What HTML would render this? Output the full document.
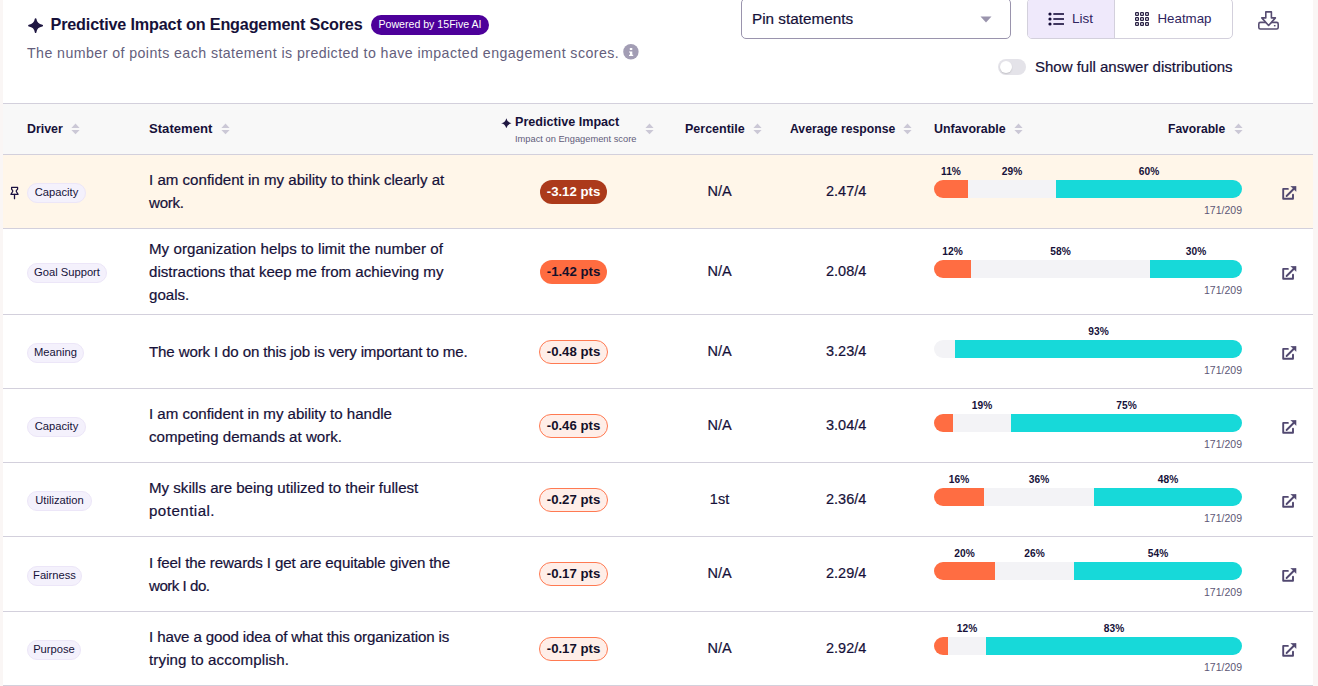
<!DOCTYPE html>
<html><head><meta charset="utf-8"><style>
html,body{margin:0;padding:0;background:#fff;width:1318px;height:686px;overflow:hidden;position:relative;font-family:"Liberation Sans", sans-serif;}
.t{position:absolute;white-space:nowrap;}
.sw{-webkit-text-stroke:0.2px currentColor;}
.r{position:absolute;}
.chip{position:absolute;box-sizing:border-box;height:20px;line-height:17px;border:1px solid #ece6f8;background:#f4f1fc;border-radius:10px;font-size:11.2px;color:#161139;white-space:nowrap;text-align:center;}
.pts{position:absolute;box-sizing:border-box;height:24px;line-height:22px;padding-top:1px;border-radius:12px;font-size:13.2px;font-weight:700;text-align:center;white-space:nowrap;}
.bar{position:absolute;height:18px;border-radius:9px;overflow:hidden;}
.bar div{position:absolute;top:0;height:18px;}
</style></head><body>
<div class="r" style="left:0px;top:0px;width:3px;height:686px;background:#faf6f5;"></div>
<div class="r" style="left:1313px;top:0px;width:5px;height:686px;background:#faf6f5;"></div>
<svg class="r" style="left:27.9px;top:17.9px" width="15.2" height="15.2" viewBox="0 0 16 16"><path d="M8 1 C8.6 5.6 10.4 7.4 15 8 C10.4 8.6 8.6 10.4 8 15 C7.4 10.4 5.6 8.6 1 8 C5.6 7.4 7.4 5.6 8 1Z" fill="#1f1742" stroke="#1f1742" stroke-width="1.7" stroke-linejoin="round"/></svg>
<div class="t " style="top:13px;font-size:16.2px;line-height:22px;font-weight:700;color:#161139;letter-spacing:-0.17px;left:50.5px;">Predictive Impact on Engagement Scores</div>
<div class="r" style="left:371px;top:15px;width:118px;height:20px;background:#4d009a;border-radius:10px;"></div>
<div class="t " style="top:17px;font-size:10.6px;line-height:14px;font-weight:400;color:#ffffff;left:130px;width:600px;text-align:center;">Powered by 15Five AI</div>
<div class="t " style="top:43.5px;font-size:14.2px;line-height:19px;font-weight:400;color:#645e7c;letter-spacing:0.43px;left:27px;">The number of points each statement is predicted to have impacted engagement scores.</div>
<svg class="r" style="left:623px;top:44.2px" width="16" height="16" viewBox="0 0 16 16"><circle cx="7.9" cy="7.8" r="7.7" fill="#a29db4"/><rect x="6.8" y="3.9" width="2.5" height="2" rx="0.5" fill="#fff"/><path d="M6 7.4 H9.3 V10.7 H10.2 V12.1 H6 V10.7 H7 V8.5 H6Z" fill="#fff"/></svg>
<div class="r" style="left:741px;top:-2px;width:270px;height:41px;background:#fff;border:1px solid #9a94ad;border-radius:5px;box-sizing:border-box;"></div>
<div class="t sw" style="top:9px;font-size:15.3px;line-height:20px;font-weight:400;color:#161139;left:752px;">Pin statements</div>
<svg class="r" style="left:980px;top:16px" width="12" height="7" viewBox="0 0 12 7"><path d="M0.5 0.5 H11.5 L6 6.5Z" fill="#9a94ad"/></svg>
<div class="r" style="left:1027px;top:-2px;width:206px;height:41px;background:#fff;border:1px solid #d3d0dc;border-radius:5px;box-sizing:border-box;"></div>
<div class="r" style="left:1028px;top:-1px;width:87px;height:39px;background:#efe9fb;border-radius:4px 0 0 4px;"></div>
<div class="r" style="left:1114px;top:-1px;width:1px;height:39px;background:#d3d0dc;"></div>
<svg class="r" style="left:1047px;top:12px" width="18" height="14" viewBox="0 0 18 14"><circle cx="3" cy="2" r="1.6" fill="#140c38"/><circle cx="3" cy="7" r="1.6" fill="#140c38"/><circle cx="3" cy="12" r="1.6" fill="#140c38"/><rect x="6.3" y="1" width="10.7" height="2" rx="0.3" fill="#40375f"/><rect x="6.3" y="6" width="10.7" height="2" rx="0.3" fill="#40375f"/><rect x="6.3" y="11" width="10.7" height="2" rx="0.3" fill="#40375f"/></svg>
<div class="t " style="top:10px;font-size:13.5px;line-height:18px;font-weight:400;color:#2f2460;left:1072px;">List</div>
<svg class="r" style="left:1135px;top:12px" width="15" height="15" viewBox="0 0 15 15"><rect x="0.6" y="0.6" width="2.8" height="2.8" rx="0.6" fill="none" stroke="#2a2245" stroke-width="1.2"/><rect x="0.6" y="5.6" width="2.8" height="2.8" rx="0.6" fill="none" stroke="#2a2245" stroke-width="1.2"/><rect x="0.6" y="10.6" width="2.8" height="2.8" rx="0.6" fill="none" stroke="#2a2245" stroke-width="1.2"/><rect x="5.6" y="0.6" width="2.8" height="2.8" rx="0.6" fill="none" stroke="#2a2245" stroke-width="1.2"/><rect x="5.6" y="5.6" width="2.8" height="2.8" rx="0.6" fill="none" stroke="#2a2245" stroke-width="1.2"/><rect x="5.6" y="10.6" width="2.8" height="2.8" rx="0.6" fill="none" stroke="#2a2245" stroke-width="1.2"/><rect x="10.6" y="0.6" width="2.8" height="2.8" rx="0.6" fill="none" stroke="#2a2245" stroke-width="1.2"/><rect x="10.6" y="5.6" width="2.8" height="2.8" rx="0.6" fill="none" stroke="#2a2245" stroke-width="1.2"/><rect x="10.6" y="10.6" width="2.8" height="2.8" rx="0.6" fill="none" stroke="#2a2245" stroke-width="1.2"/></svg>
<div class="t " style="top:10px;font-size:13.3px;line-height:18px;font-weight:400;color:#2f2460;left:1157.5px;">Heatmap</div>
<svg class="r" style="left:1257px;top:10px" width="23" height="21" viewBox="0 0 23 21"><rect x="1.8" y="12.4" width="19.4" height="6.6" rx="1.6" fill="none" stroke="#574d72" stroke-width="1.6"/><path d="M8.8 1.9 H14.4 V7.9 H18.4 L11.6 15.5 L4.8 7.9 H8.8Z" fill="#fff" stroke="#574d72" stroke-width="1.6" stroke-linejoin="round"/><rect x="16.9" y="15" width="1.6" height="1.4" fill="#574d72"/></svg>
<div class="r" style="left:998px;top:59px;width:28px;height:16px;background:#e4e3e9;border-radius:8px;"></div>
<div class="r" style="left:1000px;top:61px;width:12px;height:12px;background:#fff;border-radius:6px;box-shadow:0 1px 1.5px rgba(0,0,0,0.15);"></div>
<div class="t sw" style="top:56.7px;font-size:15px;line-height:20px;font-weight:400;color:#161139;left:1035px;">Show full answer distributions</div>
<div class="r" style="left:3px;top:103px;width:1310px;height:1px;background:#d3d0dc;"></div>
<div class="r" style="left:3px;top:104px;width:1310px;height:50px;background:#f8f8f8;"></div>
<div class="r" style="left:3px;top:154px;width:1310px;height:1px;background:#d3d0dc;"></div>
<div class="t " style="top:121.19999999999999px;font-size:12.4px;line-height:17px;font-weight:700;color:#161139;left:27px;">Driver</div>
<svg class="r" style="left:71px;top:123px" width="9" height="12" viewBox="0 0 9 12"><path d="M4.5 0.6 L8.6 4.9 H0.4Z M0.4 7 H8.6 L4.5 11.2Z" fill="#cbc8d6"/></svg>
<div class="t " style="top:120.19999999999999px;font-size:13.1px;line-height:18px;font-weight:700;color:#161139;left:149px;">Statement</div>
<svg class="r" style="left:221px;top:123px" width="9" height="12" viewBox="0 0 9 12"><path d="M4.5 0.6 L8.6 4.9 H0.4Z M0.4 7 H8.6 L4.5 11.2Z" fill="#cbc8d6"/></svg>
<svg class="r" style="left:501.2px;top:117.6px" width="10.6" height="10.6" viewBox="0 0 16 16"><path d="M8 0.2 Q9.4 6.6 15.8 8 Q9.4 9.4 8 15.8 Q6.6 9.4 0.2 8 Q6.6 6.6 8 0.2Z" fill="#1f1742"/></svg>
<div class="t " style="top:114.2px;font-size:12.6px;line-height:17px;font-weight:700;color:#161139;left:515px;">Predictive Impact</div>
<div class="t " style="top:133.1px;font-size:9.3px;line-height:13px;font-weight:400;color:#625c7a;left:515px;">Impact on Engagement score</div>
<svg class="r" style="left:645px;top:123px" width="9" height="12" viewBox="0 0 9 12"><path d="M4.5 0.6 L8.6 4.9 H0.4Z M0.4 7 H8.6 L4.5 11.2Z" fill="#cbc8d6"/></svg>
<div class="t " style="top:121.19999999999999px;font-size:12.5px;line-height:17px;font-weight:700;color:#161139;left:685px;">Percentile</div>
<svg class="r" style="left:753px;top:123px" width="9" height="12" viewBox="0 0 9 12"><path d="M4.5 0.6 L8.6 4.9 H0.4Z M0.4 7 H8.6 L4.5 11.2Z" fill="#cbc8d6"/></svg>
<div class="t " style="top:121.19999999999999px;font-size:12.2px;line-height:16px;font-weight:700;color:#161139;left:790px;">Average response</div>
<svg class="r" style="left:903px;top:123px" width="9" height="12" viewBox="0 0 9 12"><path d="M4.5 0.6 L8.6 4.9 H0.4Z M0.4 7 H8.6 L4.5 11.2Z" fill="#cbc8d6"/></svg>
<div class="t " style="top:121.19999999999999px;font-size:12.4px;line-height:17px;font-weight:700;color:#161139;left:934px;">Unfavorable</div>
<svg class="r" style="left:1014px;top:123px" width="9" height="12" viewBox="0 0 9 12"><path d="M4.5 0.6 L8.6 4.9 H0.4Z M0.4 7 H8.6 L4.5 11.2Z" fill="#cbc8d6"/></svg>
<div class="t " style="top:121.19999999999999px;font-size:12.1px;line-height:16px;font-weight:700;color:#161139;left:1168px;">Favorable</div>
<svg class="r" style="left:1234px;top:123px" width="9" height="12" viewBox="0 0 9 12"><path d="M4.5 0.6 L8.6 4.9 H0.4Z M0.4 7 H8.6 L4.5 11.2Z" fill="#cbc8d6"/></svg>
<div class="r" style="left:3px;top:155px;width:1310px;height:73px;background:#fff6e9;"></div>
<div class="r" style="left:3px;top:228px;width:1310px;height:1px;background:#d3d0dc;"></div>
<svg class="r" style="left:9px;top:186px" width="11" height="14" viewBox="0 0 11 14"><path d="M2.6 1.4 H8.6 V3.2 L7.3 4.7 V5.5 L9.1 8.3 H1.9 L3.7 5.5 V4.7 L2.6 3.2Z" fill="none" stroke="#1a1040" stroke-width="1.25" stroke-linejoin="round"/><path d="M5.5 8.3 V12.7" stroke="#1a1040" stroke-width="1.3" stroke-linecap="round"/></svg>
<div class="chip" style="left:27px;top:183px;width:59px"><span>Capacity</span></div>
<div class="t sw" style="top:170.2px;font-size:15.1px;line-height:20px;font-weight:400;color:#161139;left:149px;">I am confident in my ability to think clearly at</div>
<div class="t sw" style="top:193.2px;font-size:15.1px;line-height:20px;font-weight:400;color:#161139;letter-spacing:-0.275px;left:149px;">work.</div>
<div class="pts" style="left:540px;width:67px;top:180px;background:#ac3a1b;color:#fff;">-3.12 pts</div>
<div class="t sw" style="top:181.8px;font-size:14.5px;line-height:19px;font-weight:400;color:#161139;left:419.5px;width:600px;text-align:center;">N/A</div>
<div class="t sw" style="top:181.8px;font-size:14.5px;line-height:19px;font-weight:400;color:#161139;left:546.2px;width:600px;text-align:center;">2.47/4</div>
<div class="bar" style="left:934px;top:180px;width:308px;"><div style="left:0;width:34px;background:#ff6d42"></div><div style="left:34px;width:88px;background:#f3f3f6"></div><div style="left:122px;width:186px;background:#17d9d9"></div></div>
<div class="t " style="top:165px;font-size:10.2px;line-height:14px;font-weight:700;color:#161139;left:651.0px;width:600px;text-align:center;">11%</div>
<div class="t " style="top:165px;font-size:10.2px;line-height:14px;font-weight:700;color:#161139;left:712.0px;width:600px;text-align:center;">29%</div>
<div class="t " style="top:165px;font-size:10.2px;line-height:14px;font-weight:700;color:#161139;left:849.0px;width:600px;text-align:center;">60%</div>
<div class="t " style="top:203px;font-size:10.5px;line-height:14px;font-weight:400;color:#5d5775;left:642px;width:600px;text-align:right;">171/209</div>
<svg class="r" style="left:1282px;top:186px" width="15" height="15" viewBox="0 0 15 15"><path d="M5.9 2.9 H1.2 V12.7 H11 V8.8" fill="none" stroke="#514870" stroke-width="1.9" stroke-linejoin="round" stroke-linecap="round"/><path d="M4.6 10 L11.6 3" stroke="#514870" stroke-width="1.9" stroke-linecap="round"/><path d="M8.9 0.2 H14 V5.3Z" fill="#514870" stroke="#514870" stroke-width="0.6" stroke-linejoin="round"/></svg>
<div class="r" style="left:3px;top:314px;width:1310px;height:1px;background:#d3d0dc;"></div>
<div class="chip" style="left:27px;top:263px;width:80px"><span>Goal Support</span></div>
<div class="t sw" style="top:238.7px;font-size:15.1px;line-height:20px;font-weight:400;color:#161139;letter-spacing:0.047px;left:149px;">My organization helps to limit the number of</div>
<div class="t sw" style="top:261.7px;font-size:15.1px;line-height:20px;font-weight:400;color:#161139;left:149px;">distractions that keep me from achieving my</div>
<div class="t sw" style="top:284.7px;font-size:15.1px;line-height:20px;font-weight:400;color:#161139;left:149px;">goals.</div>
<div class="pts" style="left:540px;width:67px;top:260px;background:#ff6c40;color:#14102a;">-1.42 pts</div>
<div class="t sw" style="top:261.8px;font-size:14.5px;line-height:19px;font-weight:400;color:#161139;left:419.5px;width:600px;text-align:center;">N/A</div>
<div class="t sw" style="top:261.8px;font-size:14.5px;line-height:19px;font-weight:400;color:#161139;left:546.2px;width:600px;text-align:center;">2.08/4</div>
<div class="bar" style="left:934px;top:260px;width:308px;"><div style="left:0;width:37px;background:#ff6d42"></div><div style="left:37px;width:179px;background:#f3f3f6"></div><div style="left:216px;width:92px;background:#17d9d9"></div></div>
<div class="t " style="top:245px;font-size:10.2px;line-height:14px;font-weight:700;color:#161139;left:652.5px;width:600px;text-align:center;">12%</div>
<div class="t " style="top:245px;font-size:10.2px;line-height:14px;font-weight:700;color:#161139;left:760.5px;width:600px;text-align:center;">58%</div>
<div class="t " style="top:245px;font-size:10.2px;line-height:14px;font-weight:700;color:#161139;left:896.0px;width:600px;text-align:center;">30%</div>
<div class="t " style="top:283px;font-size:10.5px;line-height:14px;font-weight:400;color:#5d5775;left:642px;width:600px;text-align:right;">171/209</div>
<svg class="r" style="left:1282px;top:266px" width="15" height="15" viewBox="0 0 15 15"><path d="M5.9 2.9 H1.2 V12.7 H11 V8.8" fill="none" stroke="#514870" stroke-width="1.9" stroke-linejoin="round" stroke-linecap="round"/><path d="M4.6 10 L11.6 3" stroke="#514870" stroke-width="1.9" stroke-linecap="round"/><path d="M8.9 0.2 H14 V5.3Z" fill="#514870" stroke="#514870" stroke-width="0.6" stroke-linejoin="round"/></svg>
<div class="r" style="left:3px;top:388px;width:1310px;height:1px;background:#d3d0dc;"></div>
<div class="chip" style="left:27px;top:343px;width:57px"><span>Meaning</span></div>
<div class="t sw" style="top:341.7px;font-size:15.1px;line-height:20px;font-weight:400;color:#161139;letter-spacing:-0.141px;left:149px;">The work I do on this job is very important to me.</div>
<div class="pts" style="left:539px;width:69px;top:340px;background:#ffeee8;color:#14102a;border:1px solid #ff7a52;padding-top:0;">-0.48 pts</div>
<div class="t sw" style="top:341.8px;font-size:14.5px;line-height:19px;font-weight:400;color:#161139;left:419.5px;width:600px;text-align:center;">N/A</div>
<div class="t sw" style="top:341.8px;font-size:14.5px;line-height:19px;font-weight:400;color:#161139;left:546.2px;width:600px;text-align:center;">3.23/4</div>
<div class="bar" style="left:934px;top:340px;width:308px;"><div style="left:0;width:0px;background:#ff6d42"></div><div style="left:0px;width:21px;background:#f3f3f6"></div><div style="left:21px;width:287px;background:#17d9d9"></div></div>
<div class="t " style="top:325px;font-size:10.2px;line-height:14px;font-weight:700;color:#161139;left:798.5px;width:600px;text-align:center;">93%</div>
<div class="t " style="top:363px;font-size:10.5px;line-height:14px;font-weight:400;color:#5d5775;left:642px;width:600px;text-align:right;">171/209</div>
<svg class="r" style="left:1282px;top:346px" width="15" height="15" viewBox="0 0 15 15"><path d="M5.9 2.9 H1.2 V12.7 H11 V8.8" fill="none" stroke="#514870" stroke-width="1.9" stroke-linejoin="round" stroke-linecap="round"/><path d="M4.6 10 L11.6 3" stroke="#514870" stroke-width="1.9" stroke-linecap="round"/><path d="M8.9 0.2 H14 V5.3Z" fill="#514870" stroke="#514870" stroke-width="0.6" stroke-linejoin="round"/></svg>
<div class="r" style="left:3px;top:462px;width:1310px;height:1px;background:#d3d0dc;"></div>
<div class="chip" style="left:27px;top:417px;width:59px"><span>Capacity</span></div>
<div class="t sw" style="top:404.2px;font-size:15.1px;line-height:20px;font-weight:400;color:#161139;letter-spacing:-0.032px;left:149px;">I am confident in my ability to handle</div>
<div class="t sw" style="top:427.2px;font-size:15.1px;line-height:20px;font-weight:400;color:#161139;left:149px;">competing demands at work.</div>
<div class="pts" style="left:539px;width:69px;top:414px;background:#ffeee8;color:#14102a;border:1px solid #ff7a52;padding-top:0;">-0.46 pts</div>
<div class="t sw" style="top:415.8px;font-size:14.5px;line-height:19px;font-weight:400;color:#161139;left:419.5px;width:600px;text-align:center;">N/A</div>
<div class="t sw" style="top:415.8px;font-size:14.5px;line-height:19px;font-weight:400;color:#161139;left:546.2px;width:600px;text-align:center;">3.04/4</div>
<div class="bar" style="left:934px;top:414px;width:308px;"><div style="left:0;width:19px;background:#ff6d42"></div><div style="left:19px;width:58px;background:#f3f3f6"></div><div style="left:77px;width:231px;background:#17d9d9"></div></div>
<div class="t " style="top:399px;font-size:10.2px;line-height:14px;font-weight:700;color:#161139;left:682.0px;width:600px;text-align:center;">19%</div>
<div class="t " style="top:399px;font-size:10.2px;line-height:14px;font-weight:700;color:#161139;left:826.5px;width:600px;text-align:center;">75%</div>
<div class="t " style="top:437px;font-size:10.5px;line-height:14px;font-weight:400;color:#5d5775;left:642px;width:600px;text-align:right;">171/209</div>
<svg class="r" style="left:1282px;top:420px" width="15" height="15" viewBox="0 0 15 15"><path d="M5.9 2.9 H1.2 V12.7 H11 V8.8" fill="none" stroke="#514870" stroke-width="1.9" stroke-linejoin="round" stroke-linecap="round"/><path d="M4.6 10 L11.6 3" stroke="#514870" stroke-width="1.9" stroke-linecap="round"/><path d="M8.9 0.2 H14 V5.3Z" fill="#514870" stroke="#514870" stroke-width="0.6" stroke-linejoin="round"/></svg>
<div class="r" style="left:3px;top:536px;width:1310px;height:1px;background:#d3d0dc;"></div>
<div class="chip" style="left:27px;top:491px;width:65px"><span>Utilization</span></div>
<div class="t sw" style="top:478.2px;font-size:15.1px;line-height:20px;font-weight:400;color:#161139;left:149px;">My skills are being utilized to their fullest</div>
<div class="t sw" style="top:501.20000000000005px;font-size:15.1px;line-height:20px;font-weight:400;color:#161139;letter-spacing:0.478px;left:149px;">potential.</div>
<div class="pts" style="left:539px;width:69px;top:488px;background:#ffeee8;color:#14102a;border:1px solid #ff7a52;padding-top:0;">-0.27 pts</div>
<div class="t sw" style="top:489.8px;font-size:14.5px;line-height:19px;font-weight:400;color:#161139;left:419.5px;width:600px;text-align:center;">1st</div>
<div class="t sw" style="top:489.8px;font-size:14.5px;line-height:19px;font-weight:400;color:#161139;left:546.2px;width:600px;text-align:center;">2.36/4</div>
<div class="bar" style="left:934px;top:488px;width:308px;"><div style="left:0;width:50px;background:#ff6d42"></div><div style="left:50px;width:110px;background:#f3f3f6"></div><div style="left:160px;width:148px;background:#17d9d9"></div></div>
<div class="t " style="top:473px;font-size:10.2px;line-height:14px;font-weight:700;color:#161139;left:659.0px;width:600px;text-align:center;">16%</div>
<div class="t " style="top:473px;font-size:10.2px;line-height:14px;font-weight:700;color:#161139;left:739.0px;width:600px;text-align:center;">36%</div>
<div class="t " style="top:473px;font-size:10.2px;line-height:14px;font-weight:700;color:#161139;left:868.0px;width:600px;text-align:center;">48%</div>
<div class="t " style="top:511px;font-size:10.5px;line-height:14px;font-weight:400;color:#5d5775;left:642px;width:600px;text-align:right;">171/209</div>
<svg class="r" style="left:1282px;top:494px" width="15" height="15" viewBox="0 0 15 15"><path d="M5.9 2.9 H1.2 V12.7 H11 V8.8" fill="none" stroke="#514870" stroke-width="1.9" stroke-linejoin="round" stroke-linecap="round"/><path d="M4.6 10 L11.6 3" stroke="#514870" stroke-width="1.9" stroke-linecap="round"/><path d="M8.9 0.2 H14 V5.3Z" fill="#514870" stroke="#514870" stroke-width="0.6" stroke-linejoin="round"/></svg>
<div class="r" style="left:3px;top:611px;width:1310px;height:1px;background:#d3d0dc;"></div>
<div class="chip" style="left:27px;top:566px;width:55px"><span>Fairness</span></div>
<div class="t sw" style="top:552.7px;font-size:15.1px;line-height:20px;font-weight:400;color:#161139;letter-spacing:-0.111px;left:149px;">I feel the rewards I get are equitable given the</div>
<div class="t sw" style="top:575.7px;font-size:15.1px;line-height:20px;font-weight:400;color:#161139;letter-spacing:-0.489px;left:149px;">work I do.</div>
<div class="pts" style="left:539px;width:69px;top:562px;background:#ffeee8;color:#14102a;border:1px solid #ff7a52;padding-top:0;">-0.17 pts</div>
<div class="t sw" style="top:564.3px;font-size:14.5px;line-height:19px;font-weight:400;color:#161139;left:419.5px;width:600px;text-align:center;">N/A</div>
<div class="t sw" style="top:564.3px;font-size:14.5px;line-height:19px;font-weight:400;color:#161139;left:546.2px;width:600px;text-align:center;">2.29/4</div>
<div class="bar" style="left:934px;top:562px;width:308px;"><div style="left:0;width:61px;background:#ff6d42"></div><div style="left:61px;width:79px;background:#f3f3f6"></div><div style="left:140px;width:168px;background:#17d9d9"></div></div>
<div class="t " style="top:547px;font-size:10.2px;line-height:14px;font-weight:700;color:#161139;left:664.5px;width:600px;text-align:center;">20%</div>
<div class="t " style="top:547px;font-size:10.2px;line-height:14px;font-weight:700;color:#161139;left:734.5px;width:600px;text-align:center;">26%</div>
<div class="t " style="top:547px;font-size:10.2px;line-height:14px;font-weight:700;color:#161139;left:858.0px;width:600px;text-align:center;">54%</div>
<div class="t " style="top:585px;font-size:10.5px;line-height:14px;font-weight:400;color:#5d5775;left:642px;width:600px;text-align:right;">171/209</div>
<svg class="r" style="left:1282px;top:568px" width="15" height="15" viewBox="0 0 15 15"><path d="M5.9 2.9 H1.2 V12.7 H11 V8.8" fill="none" stroke="#514870" stroke-width="1.9" stroke-linejoin="round" stroke-linecap="round"/><path d="M4.6 10 L11.6 3" stroke="#514870" stroke-width="1.9" stroke-linecap="round"/><path d="M8.9 0.2 H14 V5.3Z" fill="#514870" stroke="#514870" stroke-width="0.6" stroke-linejoin="round"/></svg>
<div class="r" style="left:3px;top:685px;width:1310px;height:1px;background:#d3d0dc;"></div>
<div class="chip" style="left:27px;top:640px;width:54px"><span>Purpose</span></div>
<div class="t sw" style="top:627.2px;font-size:15.1px;line-height:20px;font-weight:400;color:#161139;letter-spacing:-0.13px;left:149px;">I have a good idea of what this organization is</div>
<div class="t sw" style="top:650.2px;font-size:15.1px;line-height:20px;font-weight:400;color:#161139;letter-spacing:0.12px;left:149px;">trying to accomplish.</div>
<div class="pts" style="left:539px;width:69px;top:637px;background:#ffeee8;color:#14102a;border:1px solid #ff7a52;padding-top:0;">-0.17 pts</div>
<div class="t sw" style="top:638.8px;font-size:14.5px;line-height:19px;font-weight:400;color:#161139;left:419.5px;width:600px;text-align:center;">N/A</div>
<div class="t sw" style="top:638.8px;font-size:14.5px;line-height:19px;font-weight:400;color:#161139;left:546.2px;width:600px;text-align:center;">2.92/4</div>
<div class="bar" style="left:934px;top:637px;width:308px;"><div style="left:0;width:14px;background:#ff6d42"></div><div style="left:14px;width:38px;background:#f3f3f6"></div><div style="left:52px;width:256px;background:#17d9d9"></div></div>
<div class="t " style="top:622px;font-size:10.2px;line-height:14px;font-weight:700;color:#161139;left:667.0px;width:600px;text-align:center;">12%</div>
<div class="t " style="top:622px;font-size:10.2px;line-height:14px;font-weight:700;color:#161139;left:814.0px;width:600px;text-align:center;">83%</div>
<div class="t " style="top:660px;font-size:10.5px;line-height:14px;font-weight:400;color:#5d5775;left:642px;width:600px;text-align:right;">171/209</div>
<svg class="r" style="left:1282px;top:643px" width="15" height="15" viewBox="0 0 15 15"><path d="M5.9 2.9 H1.2 V12.7 H11 V8.8" fill="none" stroke="#514870" stroke-width="1.9" stroke-linejoin="round" stroke-linecap="round"/><path d="M4.6 10 L11.6 3" stroke="#514870" stroke-width="1.9" stroke-linecap="round"/><path d="M8.9 0.2 H14 V5.3Z" fill="#514870" stroke="#514870" stroke-width="0.6" stroke-linejoin="round"/></svg>
</body></html>
